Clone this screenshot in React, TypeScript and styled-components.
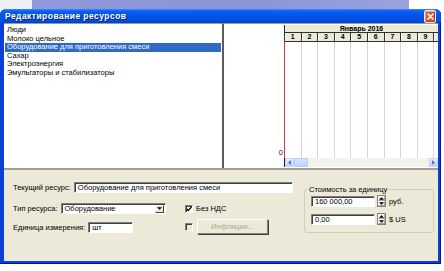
import styled, { createGlobalStyle } from "styled-components";

const GlobalStyle = createGlobalStyle`
  html, body {
    margin: 0;
    padding: 0;
    background: #ffffff;
    overflow: hidden;
  }
  body {
    font-family: "Liberation Sans", Arial, sans-serif;
    font-size: 7.5px;
    color: #000;
  }
`;

const Page = styled.div`
  width: 444px;
  height: 271px;
  display: flex;
  flex-direction: column;
  overflow: hidden;
  background: #fff;
`;

const Backdrop = styled.div`
  height: 9px;
  flex-shrink: 0;
  display: flex;
`;

const BackdropPart = styled.div<{ $w?: number; $bg: string }>`
  width: ${({ $w }) => ($w ? `${$w}px` : "auto")};
  flex: ${({ $w }) => ($w ? "none" : 1)};
  background: ${({ $bg }) => $bg};
`;

const Window = styled.div`
  width: 441px;
  height: 255px;
  flex-shrink: 0;
  display: flex;
  flex-direction: column;
  box-sizing: border-box;
  padding: 0 3px 3px 4px;
  background: #0a3fd8;
  border-radius: 6px 6px 0 0;
  box-shadow: inset 0 -1px 0 #001a8a, inset -1px 0 0 #001a8a;
`;

const TitleBar = styled.div`
  height: 14px;
  flex-shrink: 0;
  display: flex;
  align-items: center;
  justify-content: space-between;
  margin: 0 -3px 0 -4px;
  padding: 0 5px;
  border-radius: 6px 6px 0 0;
  background: linear-gradient(
    to bottom,
    #3a8cff 0%,
    #0a5ef0 15%,
    #0052e6 55%,
    #0050e0 85%,
    #0040c8 100%
  );
`;

const Title = styled.span`
  color: #fff;
  font-weight: 700;
  font-size: 8.5px;
  letter-spacing: 0.45px;
  text-shadow: 1px 1px 0 #0a1f7a;
`;

const CloseButton = styled.div`
  width: 12px;
  height: 13px;
  box-sizing: border-box;
  border: 1px solid #e8e8f0;
  border-radius: 2px;
  background: #e0552d;
  box-shadow: inset 1px 1px 0 #f39a78, inset -1px -1px 0 #b8381a;
  display: flex;
  align-items: center;
  justify-content: center;
`;

const Body = styled.div`
  flex: 1;
  display: flex;
  flex-direction: column;
  background: #ece9d8;
`;

const TopPane = styled.div`
  height: 147px;
  flex-shrink: 0;
  display: flex;
  box-sizing: border-box;
  border-bottom: 2px solid #a09d94;
`;

const List = styled.div`
  width: 218px;
  flex-shrink: 0;
  background: #fff;
  box-sizing: border-box;
  padding: 2px 1px 0 1px;
  border-top: 1px solid #9a9a9a;
`;

const ListItem = styled.div<{ $selected?: boolean }>`
  height: 8.6px;
  line-height: 8.6px;
  padding-left: 2px;
  white-space: nowrap;
  background: ${({ $selected }) => ($selected ? "#316ac5" : "transparent")};
  color: ${({ $selected }) => ($selected ? "#fff" : "#000")};
`;

const Calendar = styled.div`
  flex: 1;
  min-width: 0;
  overflow: hidden;
  display: flex;
  background: #fff;
  border-left: 2px solid #5c5c5c;
  border-top: 1px solid #9a9a9a;
`;

const Axis = styled.div`
  width: 60px;
  flex-shrink: 0;
  display: flex;
  flex-direction: column;
  justify-content: flex-end;
  align-items: flex-end;
  padding: 0 1px 11px 0;
  box-sizing: border-box;
`;

const AxisLabel = styled.span`
  color: #1a1a1a;
  font-size: 7.5px;
  line-height: 8px;
`;

const Grid = styled.div`
  flex: 1;
  min-width: 0;
  display: flex;
  flex-direction: column;
  padding-top: 1px;
  overflow: hidden;
`;

const MonthRow = styled.div`
  height: 7px;
  flex-shrink: 0;
  background: #ece9d8;
  border-left: 1px solid #303030;
  font-weight: 700;
  font-size: 7px;
  line-height: 7px;
  text-align: center;
`;

const DayRow = styled.div`
  height: 8px;
  flex-shrink: 0;
  display: flex;
  overflow: hidden;
  background: #ece9d8;
  border-top: 1px solid #303030;
  border-bottom: 1px solid #303030;
  border-left: 1px solid #303030;
`;

const DayCell = styled.div`
  width: 16.6px;
  flex-shrink: 0;
  box-sizing: border-box;
  border-right: 1px solid #303030;
  box-shadow: inset 1px 0 0 #fff;
  font-weight: 700;
  font-size: 7px;
  line-height: 8px;
  text-align: center;
`;

const GridBody = styled.div`
  flex: 1;
  display: flex;
  overflow: hidden;
  border-left: 1px solid #d23c3c;
`;

const GridColumn = styled.div`
  width: 16.6px;
  flex-shrink: 0;
  box-sizing: border-box;
  border-right: 1px solid #d6d6d6;
`;

const ScrollBar = styled.div`
  height: 9px;
  flex-shrink: 0;
  display: flex;
  align-items: stretch;
  background: #f3f3ee;
  border-left: 1px solid #1e1e1e;
  margin-bottom: 1px;
`;

const ScrollButton = styled.div`
  width: 9px;
  flex-shrink: 0;
  box-sizing: border-box;
  border: 1px solid #c3d3fd;
  border-radius: 1px;
  background: linear-gradient(to bottom, #e4ecfe, #bccffb);
  display: flex;
  align-items: center;
  justify-content: center;
`;

const ScrollThumb = styled.div`
  width: 14px;
  flex-shrink: 0;
  box-sizing: border-box;
  border: 1px solid #b8cbf8;
  border-radius: 1px;
  background: linear-gradient(to bottom, #d6e2fe, #c0d2fb);
`;

const ScrollTrack = styled.div`
  flex: 1;
`;

const BottomPanel = styled.div`
  flex: 1;
  display: flex;
  gap: 11px;
  padding: 12px 0 0 9px;
  box-sizing: border-box;
`;

const Fields = styled.div`
  width: 280px;
  flex-shrink: 0;
  display: flex;
  flex-direction: column;
`;

const Row = styled.div<{ $mt?: number }>`
  display: flex;
  align-items: center;
  margin-top: ${({ $mt }) => $mt ?? 0}px;
`;

const FieldGroup = styled.div<{ $full?: boolean }>`
  width: ${({ $full }) => ($full ? "auto" : "172px")};
  flex: ${({ $full }) => ($full ? 1 : "none")};
  display: flex;
  align-items: center;
  gap: 3px;
`;

const Label = styled.span`
  white-space: nowrap;
  color: #000;
`;

const TextBox = styled.div<{ $w?: number; $h?: number }>`
  width: ${({ $w }) => ($w ? `${$w}px` : "auto")};
  flex: ${({ $w }) => ($w ? "none" : 1)};
  height: ${({ $h }) => $h ?? 11}px;
  box-sizing: border-box;
  background: #fff;
  border-top: 1px solid #808080;
  border-left: 1px solid #808080;
  border-right: 1px solid #fff;
  border-bottom: 1px solid #fff;
  box-shadow: inset 1px 1px 0 #404040;
  padding-left: 3px;
  display: flex;
  align-items: center;
  white-space: nowrap;
  overflow: hidden;
`;

const Select = styled(TextBox)`
  padding-right: 1px;
  justify-content: space-between;
`;

const DropButton = styled.div`
  width: 9px;
  height: 8px;
  box-sizing: border-box;
  background: #ece9d8;
  border: 1px solid;
  border-color: #fff #404040 #404040 #fff;
  display: flex;
  align-items: center;
  justify-content: center;
`;

const CheckCell = styled.div`
  display: flex;
  align-items: center;
  gap: 3px;
`;

const CheckBox = styled.div<{ $disabled?: boolean }>`
  width: 8px;
  height: 8px;
  box-sizing: border-box;
  background: ${({ $disabled }) => ($disabled ? "#ece9d8" : "#fff")};
  border-top: 1px solid #808080;
  border-left: 1px solid #808080;
  border-right: 1px solid #fff;
  border-bottom: 1px solid #fff;
  box-shadow: inset 1px 1px 0 #404040;
  display: flex;
  align-items: center;
  justify-content: center;
`;

const DisabledButton = styled.div`
  width: 71px;
  height: 15px;
  box-sizing: border-box;
  margin-left: 1px;
  margin-top: -1px;
  border: 1px solid;
  border-color: #fff #808080 #808080 #fff;
  box-shadow: 1px 1px 0 #404040;
  color: #aca899;
  display: flex;
  align-items: center;
  justify-content: center;
`;

const GroupBox = styled.fieldset`
  margin: 4px 0 0 0;
  padding: 2px 0 0 6px;
  width: 130px;
  height: 47px;
  box-sizing: border-box;
  border: 1px solid #d0d0bf;
  border-radius: 3px;
  display: flex;
  flex-direction: column;
  gap: 6px;
`;

const Legend = styled.legend`
  padding: 0 1px;
  margin-left: -3px;
  font-size: 7.5px;
  line-height: 7px;
  color: #000;
`;

const MoneyRow = styled.div`
  display: flex;
  align-items: center;
  gap: 3px;
`;

const Spinner = styled.div`
  width: 9px;
  height: 12px;
  box-sizing: border-box;
  margin-left: -1px;
  display: flex;
  flex-direction: column;
  border: 1px solid #808080;
  background: #ece9d8;
`;

const SpinHalf = styled.div`
  flex: 1;
  display: flex;
  align-items: center;
  justify-content: center;
  border: 1px solid;
  border-color: #fff #a0a0a0 #a0a0a0 #fff;
`;

const Arrow = ({ dir, color = "#000" }: { dir: "up" | "down" | "left" | "right"; color?: string }) => {
  const vertical = dir === "up" || dir === "down";
  const pts = {
    up: "0,3 3,0 6,3",
    down: "0,0 3,3 6,0",
    left: "3,0 0,3 3,6",
    right: "0,0 3,3 0,6",
  }[dir];
  return (
    <svg width={vertical ? 5 : 3} height={vertical ? 3 : 5} viewBox={vertical ? "0 0 6 3" : "0 0 3 6"}>
      <polygon points={pts} fill={color} />
    </svg>
  );
};

const resources = [
  "Люди",
  "Молоко цельное",
  "Оборудование для приготовления смеси",
  "Сахар",
  "Электроэнергия",
  "Эмульгаторы и стабилизаторы",
];

const days = [1, 2, 3, 4, 5, 6, 7, 8, 9, 10];

const App = () => {
  return (
    <Page>
      <GlobalStyle />
      <Backdrop>
        <BackdropPart $w={32} $bg="#eef0f6" />
        <BackdropPart $bg="linear-gradient(to right, #8e98da, #8a95d8 60%, #9aa3dd)" />
        <BackdropPart $w={35} $bg="#ffffff" />
      </Backdrop>
      <Window>
        <TitleBar>
          <Title>Редактирование ресурсов</Title>
          <CloseButton>
            <svg width="7" height="7" viewBox="0 0 7 7">
              <path d="M1 1 L6 6 M6 1 L1 6" stroke="#fff" strokeWidth="1.6" strokeLinecap="round" />
            </svg>
          </CloseButton>
        </TitleBar>
        <Body>
          <TopPane>
            <List>
              {resources.map((r, i) => (
                <ListItem key={r} $selected={i === 2}>
                  {r}
                </ListItem>
              ))}
            </List>
            <Calendar>
              <Axis>
                <AxisLabel>0</AxisLabel>
              </Axis>
              <Grid>
                <MonthRow>Январь 2016</MonthRow>
                <DayRow>
                  {days.map((d) => (
                    <DayCell key={d}>{d < 10 ? d : ""}</DayCell>
                  ))}
                </DayRow>
                <GridBody>
                  {days.map((d) => (
                    <GridColumn key={d} />
                  ))}
                </GridBody>
                <ScrollBar>
                  <ScrollButton>
                    <Arrow dir="left" color="#4d6185" />
                  </ScrollButton>
                  <ScrollThumb />
                  <ScrollTrack />
                  <ScrollButton>
                    <Arrow dir="right" color="#4d6185" />
                  </ScrollButton>
                </ScrollBar>
              </Grid>
            </Calendar>
          </TopPane>
          <BottomPanel>
            <Fields>
              <Row>
                <FieldGroup $full>
                  <Label>Текущий ресурс:</Label>
                  <TextBox>Оборудование для приготовления смеси</TextBox>
                </FieldGroup>
              </Row>
              <Row $mt={10}>
                <FieldGroup>
                  <Label>Тип ресурса:</Label>
                  <Select $w={105} $h={11}>
                    <span>Оборудование</span>
                    <DropButton>
                      <Arrow dir="down" />
                    </DropButton>
                  </Select>
                </FieldGroup>
                <CheckCell>
                  <CheckBox>
                    <svg width="6" height="6" viewBox="0 0 6 6">
                      <path d="M0.5 2.8 L2.2 4.6 L5.5 1" stroke="#000" strokeWidth="1.3" fill="none" />
                    </svg>
                  </CheckBox>
                  <Label>Без НДС</Label>
                </CheckCell>
              </Row>
              <Row $mt={6}>
                <FieldGroup>
                  <Label>Единица измерения:</Label>
                  <TextBox $w={45}>шт</TextBox>
                </FieldGroup>
                <CheckCell>
                  <CheckBox $disabled />
                  <DisabledButton>Инфляция...</DisabledButton>
                </CheckCell>
              </Row>
            </Fields>
            <GroupBox>
              <Legend>Стоимость за единицу</Legend>
              <MoneyRow>
                <TextBox $w={64}>160 000,00</TextBox>
                <Spinner>
                  <SpinHalf>
                    <Arrow dir="up" />
                  </SpinHalf>
                  <SpinHalf>
                    <Arrow dir="down" />
                  </SpinHalf>
                </Spinner>
                <Label>руб.</Label>
              </MoneyRow>
              <MoneyRow>
                <TextBox $w={64}>0,00</TextBox>
                <Spinner>
                  <SpinHalf>
                    <Arrow dir="up" />
                  </SpinHalf>
                  <SpinHalf>
                    <Arrow dir="down" />
                  </SpinHalf>
                </Spinner>
                <Label>$ US</Label>
              </MoneyRow>
            </GroupBox>
          </BottomPanel>
        </Body>
      </Window>
    </Page>
  );
};

export default App;
